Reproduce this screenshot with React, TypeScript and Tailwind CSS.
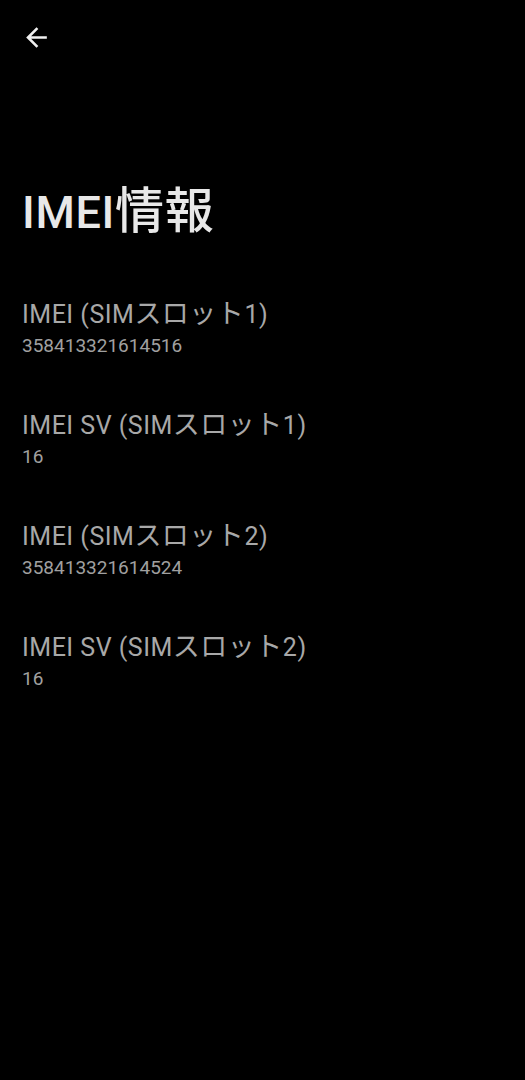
import React from "react";

const items = [
  { a: "IMEI (SIM", j: "スロット", b: "1)", v: "358413321614516" },
  { a: "IMEI SV (SIM", j: "スロット", b: "1)", v: "16" },
  { a: "IMEI (SIM", j: "スロット", b: "2)", v: "358413321614524" },
  { a: "IMEI SV (SIM", j: "スロット", b: "2)", v: "16" },
];

export default function App() {
  return (
    <div
      className="w-[525px] h-[1080px] bg-black overflow-hidden"
      style={{ fontFamily: 'Roboto, "Noto Sans CJK JP", sans-serif' }}
    >
      <div className="h-[74px] pl-[21px] pt-[22px]">
        <svg width="31" height="31" viewBox="0 0 24 24" fill="#f0f0f0">
          <path d="M20 11H7.83l5.59-5.59L12 4l-8 8 8 8 1.41-1.41L7.83 13H20v-2z" />
        </svg>
      </div>
      <h1 className="pl-[22px] mt-[110px] text-[45px] leading-[56px] tracking-[0.7px] text-[#e8e8e8] font-medium">
        IMEI<span className="text-[49px]">情報</span>
      </h1>
      <div className="mt-[54px] flex flex-col">
        {items.map((it, i) => (
          <div key={i} className="pl-[22px] h-[111px]">
            <div className="text-[25px] leading-[38px] tracking-[0.5px] text-[#a8a8a8]">
              {it.a}
              <span className="text-[27px]">{it.j}</span>
              {it.b}
            </div>
            <div className="text-[19px] leading-[24px] text-[#a0a0a0]">{it.v}</div>
          </div>
        ))}
      </div>
    </div>
  );
}
